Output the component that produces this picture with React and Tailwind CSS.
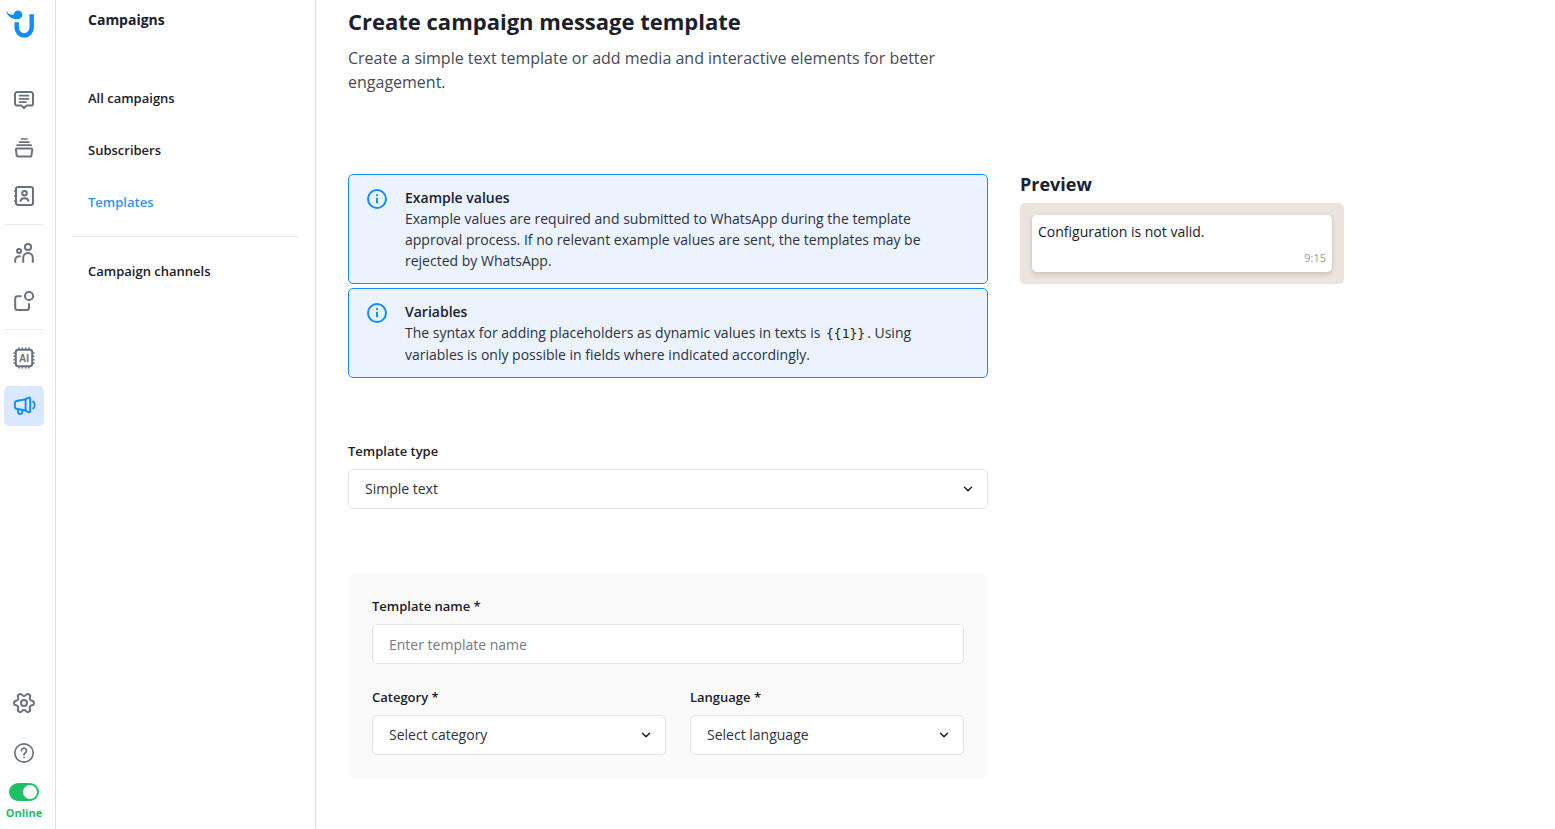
import { ChevronDown, Settings } from "lucide-react";

const stroke = {
  width: 24,
  height: 24,
  viewBox: "0 0 24 24",
  fill: "none",
  stroke: "currentColor",
  strokeWidth: 2,
  strokeLinecap: "round",
  strokeLinejoin: "round",
  "aria-hidden": true,
};

function Logo() {
  return (
    <svg width="28" height="28" viewBox="6 10 28 28" fill="none" aria-hidden="true">
      <path d="M16.7 22.3v5.200a7.500 8 0 0 0 15 0V14.300" stroke="#148cff" strokeWidth="4.500" />
      <circle cx="18" cy="14.700" r="4.300" fill="#148cff" />
      <path d="M6 10.600C7.600 13.300 10.200 15.600 14 14.400L18.300 19C12.500 19.800 7 16.600 6 10.600z" fill="#148cff" />
    </svg>
  );
}

function ChatIcon() {
  return (
    <svg {...stroke}>
      <path d="M5.200 4h13.600a2.200 2.200 0 0 1 2.200 2.200v9.200a2.200 2.200 0 0 1-2.200 2.200h-4.300L12 20l-2.500-2.400H5.200A2.200 2.200 0 0 1 3 15.400V6.200A2.200 2.200 0 0 1 5.200 4z" />
      <path strokeWidth="1.700" d="M7.500 7.700h9M7.500 10.900h9M7.500 14.100h6.500" />
    </svg>
  );
}

function StackIcon() {
  return (
    <svg {...stroke}>
      <path strokeWidth="1.700" d="M9.500 3h5.500M7.500 6.100h9.500M5.200 9.200h14" />
      <path d="M4.900 12.500h14.400a1 1 0 0 1 1 1.100l-.9 6a1.200 1.200 0 0 1-1.200 1H6a1.200 1.200 0 0 1-1.200-1l-.9-6a1 1 0 0 1 1-1.100z" />
    </svg>
  );
}

function ContactIcon() {
  return (
    <svg {...stroke}>
      <rect x="4" y="3" width="17" height="18" rx="2.200" />
      <path d="M3 7h1M3 12h1M3 17h1M8.600 16.800c.6-3.400 7.200-3.400 7.800 0" />
      <circle cx="12.500" cy="9.200" r="2.300" />
    </svg>
  );
}

function PeopleIcon() {
  return (
    <svg {...stroke} strokeLinecap="butt">
      <circle cx="16" cy="6" r="3.100" />
      <circle cx="7" cy="10" r="2" />
      <path d="M11.200 21.800v-5a4.800 4.800 0 0 1 9.600 0v5M3.200 21.800v-2.600a3.900 3.900 0 0 1 5.600-3.500" />
    </svg>
  );
}

function BadgeIcon() {
  return (
    <svg {...stroke} strokeLinecap="butt">
      <circle cx="17" cy="7" r="4.100" />
      <path d="M9.500 7.200H5.500a2.300 2.300 0 0 0-2.300 2.300v9.200A2.300 2.300 0 0 0 5.500 21h9.200a2.300 2.300 0 0 0 2.300-2.300v-4.500" />
    </svg>
  );
}

function AiIcon() {
  return (
    <svg {...stroke}>
      <rect x="3.800" y="3.800" width="16.400" height="16.400" rx="2.200" />
      <path
        strokeLinecap="butt"
        strokeWidth="1.600"
        d="M7 1.500v2M10.300 1.500v2M13.700 1.500v2M17 1.500v2M7 20.500v2M10.300 20.500v2M13.700 20.500v2M17 20.500v2M1.500 7h2M1.500 10.300h2M1.500 13.700h2M1.500 17h2M20.500 7h2M20.500 10.300h2M20.500 13.700h2M20.500 17h2"
      />
      <text x="12" y="15.600" textAnchor="middle" fontSize="10" fontWeight="700" fill="currentColor" stroke="none" className="font-['Liberation_Sans',sans-serif]">
        AI
      </text>
    </svg>
  );
}

function MegaphoneIcon() {
  return (
    <svg {...stroke} strokeWidth="1.900">
      <path d="M13.600 5.300 4.600 7A2 2 0 0 0 2.900 9v3.800a2 2 0 0 0 1.700 2l9 1.700z" />
      <path d="M13.600 5.300 16.500 3.700a1.100 1.100 0 0 1 1.700.9v12.600a1.100 1.100 0 0 1-1.700.9l-2.900-1.600M5.600 15.200l.5 2.800a2.100 2.100 0 0 0 4.200 0l.2-1.900M21.200 7.500c2 2 2 5 0 7" />
    </svg>
  );
}

function HelpIcon() {
  return (
    <svg {...stroke} strokeWidth="1.700">
      <circle cx="12" cy="12" r="9.200" />
      <path d="M9.500 9.600a2.500 2.500 0 1 1 3.900 2.100c-.9.600-1.400 1-1.400 2" />
      <circle cx="12" cy="16.500" r=".5" fill="currentColor" strokeWidth="1" />
    </svg>
  );
}

function InfoIcon() {
  return (
    <svg {...stroke} className="shrink-0 text-[#148cff]">
      <circle cx="12" cy="12" r="9" />
      <path strokeLinecap="butt" d="M12 10.700v5.600M12 7.200v1.700" />
    </svg>
  );
}

function RailButton({ label, active, children }) {
  return (
    <button
      type="button"
      aria-label={label}
      className={
        active
          ? "flex size-10 items-center justify-center rounded-[5px] bg-[#dbe9ff] text-[#148cff]"
          : "flex size-10 items-center justify-center rounded-[5px] text-[#69727d]"
      }
    >
      {children}
    </button>
  );
}

function Rail() {
  return (
    <aside className="flex w-14 shrink-0 flex-col justify-between border-r border-[#dfe2e5] pt-[10px] pr-[11px] pb-2 pl-1">
      <div>
        <a href="#home" aria-label="Home" className="ml-[2px] block w-7">
          <Logo />
        </a>
        <nav aria-label="Main" className="mt-[42px] flex flex-col gap-2">
          <RailButton label="Conversations"><ChatIcon /></RailButton>
          <RailButton label="Queue"><StackIcon /></RailButton>
          <RailButton label="Contacts"><ContactIcon /></RailButton>
          <hr className="border-[#e8eaed]" />
          <RailButton label="Team"><PeopleIcon /></RailButton>
          <RailButton label="Apps"><BadgeIcon /></RailButton>
          <hr className="border-[#e8eaed]" />
          <RailButton label="AI agents"><AiIcon /></RailButton>
          <RailButton label="Campaigns" active><MegaphoneIcon /></RailButton>
        </nav>
      </div>
      <div className="flex flex-col items-center gap-[10px]">
        <RailButton label="Settings">
          <Settings size={24} strokeWidth={2} className="rotate-90" />
        </RailButton>
        <RailButton label="Help"><HelpIcon /></RailButton>
        <label className="flex flex-col items-center gap-1 text-[11px] leading-4 font-bold text-[#1fbf68]">
          <input
            type="checkbox"
            role="switch"
            defaultChecked
            className="h-[18px] w-[30px] appearance-none rounded-full bg-gray-400 p-[2px] before:block before:size-[14px] before:rounded-full before:bg-white checked:bg-[#1fbf68] checked:before:ml-3"
          />
          Online
        </label>
      </div>
    </aside>
  );
}

function NavLink({ children, active }) {
  return (
    <a
      href="#nav"
      className={
        active
          ? "flex h-9 items-center px-4 text-[13px] leading-5 font-semibold text-[#2a96fb]"
          : "flex h-9 items-center px-4 text-[13px] leading-5 font-semibold"
      }
    >
      {children}
    </a>
  );
}

function Sidebar() {
  return (
    <aside className="w-[260px] shrink-0 border-r border-[#dfe2e5] px-4 pt-[10px]">
      <h2 className="px-4 text-sm font-bold">Campaigns</h2>
      <nav aria-label="Campaigns" className="mt-[50px] flex flex-col gap-4">
        <NavLink>All campaigns</NavLink>
        <NavLink>Subscribers</NavLink>
        <NavLink active>Templates</NavLink>
        <hr className="border-[#e8eaed]" />
        <NavLink>Campaign channels</NavLink>
      </nav>
    </aside>
  );
}

function Notice({ title, children }) {
  return (
    <section className="flex gap-4 rounded-[5px] border border-[#148cff] bg-[#ebf3ff] py-3 pr-12 pl-4 text-sm leading-[21px]">
      <InfoIcon />
      <div>
        <h3 className="font-semibold">{title}</h3>
        <p className="text-[#2d323d]">{children}</p>
      </div>
    </section>
  );
}

function FieldLabel({ htmlFor, children }) {
  return (
    <label htmlFor={htmlFor} className="text-[13px] leading-[19px] font-semibold">
      {children}
    </label>
  );
}

function SelectField({ id, label, value }) {
  return (
    <div className="flex flex-col gap-2">
      <FieldLabel htmlFor={id}>{label}</FieldLabel>
      <div className="relative">
        <select id={id} className="block h-10 w-full appearance-none rounded-[5px] border border-[#e0e6ef] bg-white px-4 text-sm text-[#2d323d]">
          <option>{value}</option>
        </select>
        <ChevronDown size={14} strokeWidth={2.6} className="pointer-events-none absolute top-[13px] right-[13px]" aria-hidden="true" />
      </div>
    </div>
  );
}

export default function App() {
  return (
    <div className="flex min-h-screen bg-white font-['Open_Sans',sans-serif] text-[#1b202c]">
      <Rail />
      <Sidebar />
      <main className="min-w-0 flex-1 px-8 pt-2 pb-12">
        <header className="max-w-[640px]">
          <h1 className="text-[22px] leading-[26px] font-bold">Create campaign message template</h1>
          <p className="mt-3 text-base leading-6 text-[#454b55]">
            Create a simple text template or add media and interactive elements for better engagement.
          </p>
        </header>
        <div className="mt-20 flex items-start gap-8">
          <form className="flex max-w-[640px] flex-1 flex-col gap-16">
            <div className="flex flex-col gap-1">
              <Notice title="Example values">
                Example values are required and submitted to WhatsApp during the template approval process. If no
                relevant example values are sent, the templates may be rejected by WhatsApp.
              </Notice>
              <Notice title="Variables">
                The syntax for adding placeholders as dynamic values in texts is{" "}
                <code className="rounded-[3px] bg-[#edf1f5] px-[2px] py-[2px] font-['DejaVu_Sans_Mono',monospace] text-[13px] text-[#1b202c]">
                  {"{{1}}"}
                </code>
                . Using variables is only possible in fields where indicated accordingly.
              </Notice>
            </div>
            <SelectField id="template-type" label="Template type" value="Simple text" />
            <div className="flex flex-col gap-6 rounded-lg bg-[#fafafa] p-6">
              <div className="flex flex-col gap-2">
                <FieldLabel htmlFor="template-name">Template name *</FieldLabel>
                <input
                  id="template-name"
                  type="text"
                  placeholder="Enter template name"
                  className="h-10 w-full rounded-[5px] border border-[#e0e6ef] bg-white px-4 text-sm placeholder:text-[#757a82]"
                />
              </div>
              <div className="grid grid-cols-[294fr_274fr] gap-6">
                <SelectField id="category" label="Category *" value="Select category" />
                <SelectField id="language" label="Language *" value="Select language" />
              </div>
            </div>
          </form>
          <section className="w-[324px] shrink-0">
            <h2 className="mb-2 text-lg leading-[21px] font-bold">Preview</h2>
            <div className="rounded-[5px] bg-[#ebe4dd] p-3">
              <div className="rounded-[5px] bg-white p-[6px] shadow-[0_2px_5px_rgba(0,0,0,0.16)]">
                <p className="text-sm leading-[21px]">Configuration is not valid.</p>
                <p className="mt-2 text-right text-[11px] leading-4 text-[#999999]">9:15</p>
              </div>
            </div>
          </section>
        </div>
      </main>
    </div>
  );
}
